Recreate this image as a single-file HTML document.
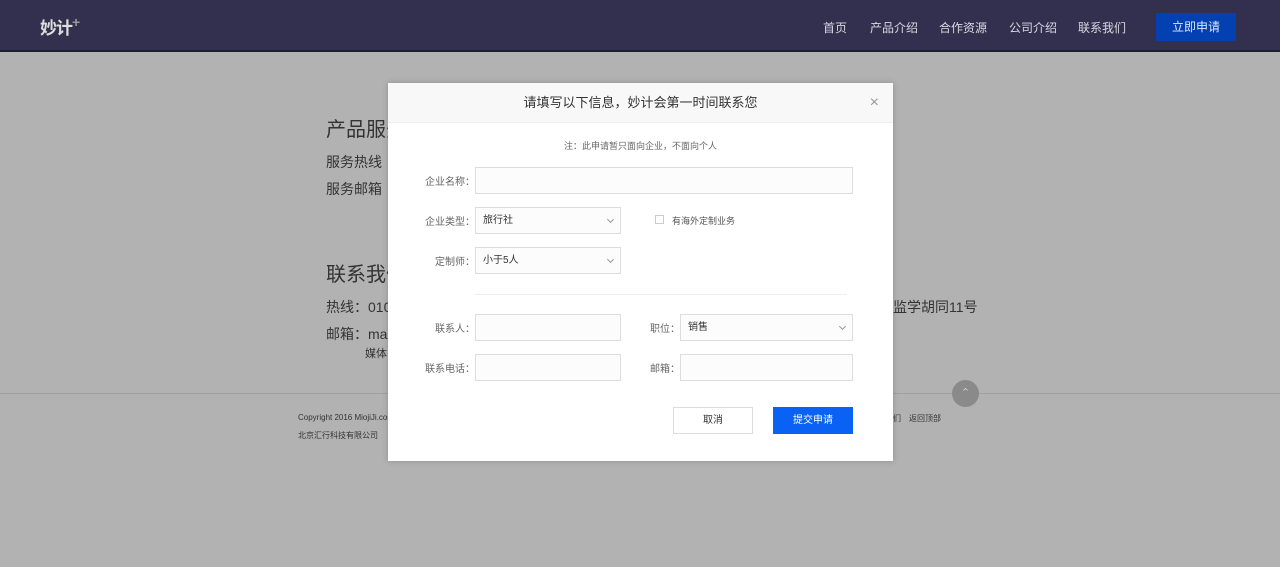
<!DOCTYPE html>
<html><head><meta charset="utf-8"><style>
*{margin:0;padding:0;box-sizing:border-box}
body{width:1280px;height:567px;overflow:hidden;background:#b2b2b2;font-family:"Liberation Sans","Noto Sans CJK SC",sans-serif;position:relative;color:#333}
.a{position:absolute;white-space:nowrap}
.hd{position:absolute;left:0;top:0;width:1280px;height:52px;background:#33304f;border-bottom:2px solid #1f1d33}
.nav{color:#d8d8e0;font-size:12px;top:19px}
.bg{color:#333}
.m{position:absolute;left:388px;top:83px;width:505px;height:378px;background:#fff;box-shadow:0 0 6px rgba(0,0,0,.2)}
.mh{height:40px;background:#f8f8f8;border-bottom:1px solid #eee;text-align:center;line-height:40px;font-size:13px;color:#333}
.lb{font-size:10px;color:#666;text-align:right;width:70px}
.in{position:absolute;border:1px solid #ddd;background:#fcfcfc;height:27px;font-size:10px;color:#333;line-height:25px;padding-left:7px}
.ch{position:absolute;right:7px;top:9px;width:5px;height:5px;border-right:1px solid #999;border-bottom:1px solid #999;transform:rotate(45deg)}
</style></head><body>
<div class="hd"></div>
<div class="a" style="left:40px;top:14px;color:#ddd;font-size:17px;font-weight:bold;letter-spacing:-1px">妙计<span style="color:#999;font-size:14px;vertical-align:top">+</span></div>
<div class="a nav" style="left:823px">首页</div>
<div class="a nav" style="left:870px">产品介绍</div>
<div class="a nav" style="left:939px">合作资源</div>
<div class="a nav" style="left:1009px">公司介绍</div>
<div class="a nav" style="left:1078px">联系我们</div>
<div class="a" style="left:1156px;top:13px;width:80px;height:28px;background:#0341b3;border-radius:2px;color:#e0e6f4;font-size:12px;text-align:center;line-height:28px">立即申请</div>

<div class="a bg" style="left:326px;top:113px;font-size:20px">产品服务</div>
<div class="a bg" style="left:326px;top:152px;font-size:14px">服务热线</div>
<div class="a bg" style="left:326px;top:179px;font-size:14px">服务邮箱</div>
<div class="a bg" style="left:326px;top:258px;font-size:20px">联系我们</div>
<div class="a bg" style="left:326px;top:297px;font-size:14px">热线：010</div>
<div class="a bg" style="left:326px;top:324px;font-size:14px">邮箱：ma</div>
<div class="a bg" style="left:365px;top:345px;font-size:11px">媒体</div>
<div class="a bg" style="left:865px;top:297px;font-size:14px">国子监学胡同11号</div>
<div class="a" style="left:0;top:393px;width:1280px;height:1px;background:#a0a0a0"></div>
<div class="a" style="left:952px;top:380px;width:27px;height:27px;border-radius:50%;background:#8a8a8a;color:#ccc;font-size:11px;text-align:center;line-height:26px">⌃</div>
<div class="a bg" style="left:298px;top:413px;font-size:8px">Copyright 2016 MiojiJi.com</div>
<div class="a bg" style="left:298px;top:430px;font-size:8px">北京汇行科技有限公司</div>
<div class="a bg" style="left:893px;top:413px;font-size:8px">们　返回顶部</div>

<div class="m">
<div class="mh">请填写以下信息，妙计会第一时间联系您</div>
<div class="a" style="right:14px;top:11px;font-size:16px;color:#999;font-weight:300">×</div>
<div class="a" style="left:0;width:505px;top:56px;text-align:center;font-size:9px;color:#666">注：此申请暂只面向企业，不面向个人</div>
<div class="a lb" style="left:17px;top:90px">企业名称：</div>
<div class="in" style="left:87px;top:84px;width:378px"></div>
<div class="a lb" style="left:17px;top:130px">企业类型：</div>
<div class="in" style="left:87px;top:124px;width:146px">旅行社<i class="ch"></i></div>
<div class="a" style="left:267px;top:132px;width:9px;height:9px;border:1px solid #ccc"></div>
<div class="a" style="left:284px;top:131px;font-size:9px;color:#555">有海外定制业务</div>
<div class="a lb" style="left:17px;top:170px">定制师：</div>
<div class="in" style="left:87px;top:164px;width:146px">小于5人<i class="ch"></i></div>
<div class="a" style="left:87px;top:211px;width:372px;height:1px;background:#eee"></div>
<div class="a lb" style="left:17px;top:237px">联系人：</div>
<div class="in" style="left:87px;top:231px;width:146px"></div>
<div class="a lb" style="left:222px;top:237px">职位：</div>
<div class="in" style="left:292px;top:231px;width:173px">销售<i class="ch"></i></div>
<div class="a lb" style="left:17px;top:277px">联系电话：</div>
<div class="in" style="left:87px;top:271px;width:146px"></div>
<div class="a lb" style="left:222px;top:277px">邮箱：</div>
<div class="in" style="left:292px;top:271px;width:173px"></div>
<div class="a" style="left:285px;top:324px;width:80px;height:27px;border:1px solid #ddd;text-align:center;line-height:25px;font-size:10px;color:#333">取消</div>
<div class="a" style="left:385px;top:324px;width:80px;height:27px;background:#0a62f5;text-align:center;line-height:27px;font-size:10px;color:#fff">提交申请</div>
</div>
</body></html>
